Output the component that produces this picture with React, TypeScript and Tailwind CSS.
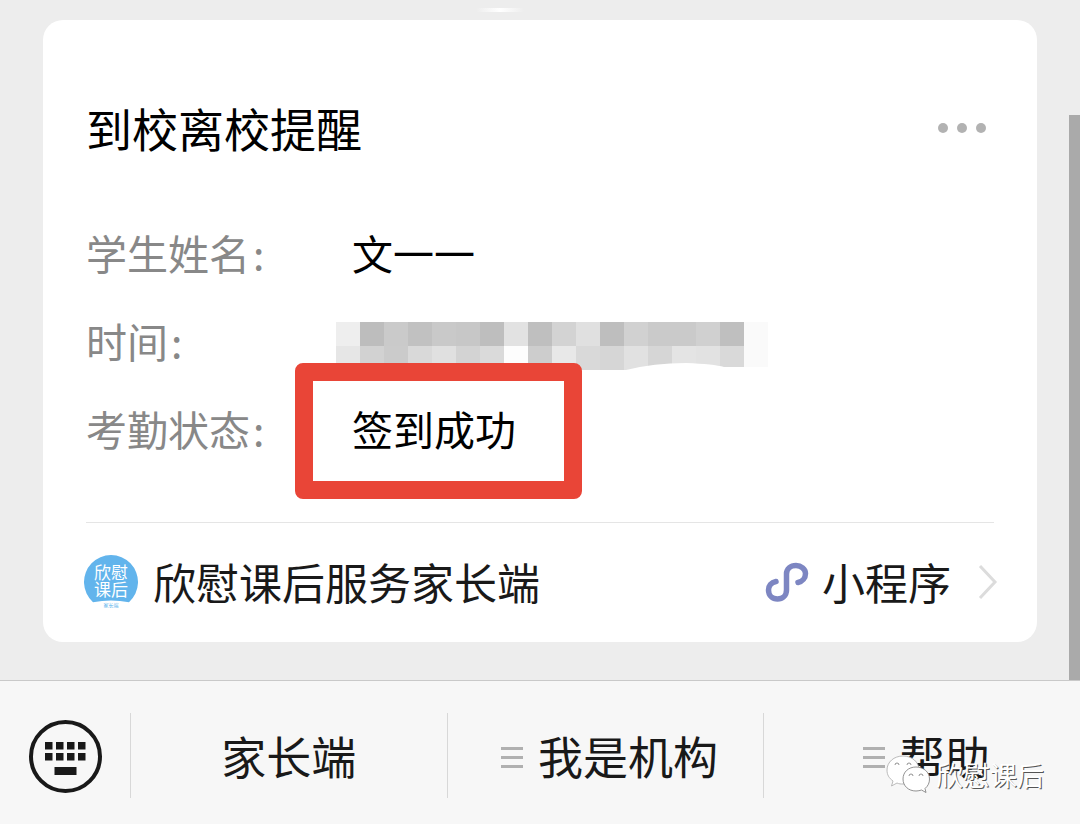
import type { ReactNode } from "react"

// block colours, one per 24px step
const MOSAIC_TOP = [
  "#eeeeee", "#bdbdbd", "#cacaca", "#c1c1c1", "#c9c9c9", "#c7c7c7", "#bebebe", "#e2e2e2", "#bfbfbf",
  "#d3d3d3", "#e0e0e0", "#bebebe", "#d1d1d1", "#cacaca", "#cacaca", "#d0d0d0", "#bfbfbf", "#fafafa",
]
const MOSAIC_BOTTOM = [
  "#e6e6e6", "#d2d2d2", "#cbcbcb", "#d9d9d9", "#e0e0e0", "#d3d3d3", "#dadada", "#fdfdfd", "#cdcdcd",
  "#e8e8e8", "#d9d9d9", "#d6d6d6", "#e1e1e1", "#d6d6d6", "#e4e4e4", "#e2e2e2", "#d9d9d9", "#fafafa",
]

export default function App() {
  return (
    <div className="relative flex min-h-screen flex-col bg-[#ededed] font-['Noto_Sans_CJK_SC',sans-serif] text-[#191919]">
      <main className="relative flex-1 px-[43px] pt-5 pb-[38px]">
        <div className="absolute top-2 left-[476px] h-1 w-12 rounded-full bg-linear-to-r from-[#ededed] via-white to-[#ededed]" />
        <NoticeCard />
        <div className="absolute right-0 bottom-0 top-[115px] w-[11px] bg-[#aaaaaa]" />
      </main>
      <MenuBar />
      <Watermark />
    </div>
  )
}

function NoticeCard() {
  return (
    <article className="rounded-[20px] bg-white px-[43px] pt-[59px]">
      <header className="flex items-center justify-between">
        <h1 className="text-[46px] leading-[96px] text-black">到校离校提醒</h1>
        <button type="button" aria-label="更多" className="mr-2 flex gap-[9px] pt-0.5">
          <span className="size-[10px] rounded-full bg-[#b2b2b2]" />
          <span className="size-[10px] rounded-full bg-[#b2b2b2]" />
          <span className="size-[10px] rounded-full bg-[#b2b2b2]" />
        </button>
      </header>

      <dl className="mt-[34px] text-[41px]">
        <Field label="学生姓名">文一一</Field>
        <Field label="时间">
          <Mosaic />
        </Field>
        <Field label="考勤状态">
          <span className="relative">
            签到成功
            <span className="absolute top-1/2 -left-[57px] mt-[3px] h-[136px] w-[287px] -translate-y-1/2 rounded-lg border-[18px] border-[#e94537]" />
          </span>
        </Field>
      </dl>

      <a href="#mini-program" className="mt-[49px] flex h-[120px] items-center border-t border-[#e5e5e5] pb-0.5 text-[43px]">
        <Avatar />
        <span className="ml-[15px] flex-1">欣慰课后服务家长端</span>
        <MiniProgramIcon />
        <span className="ml-3">小程序</span>
        <svg viewBox="0 0 20 36" className="ml-[27px] -mr-1 h-9 w-5" fill="none" stroke="#dcdcdc" strokeWidth="3">
          <path d="M2 2l15 16L2 34" />
        </svg>
      </a>
    </article>
  )
}

function Field({ label, children }: { label: string; children: ReactNode }) {
  return (
    <div className="flex h-[88px] items-center">
      <dt className="flex w-[266px] shrink-0 gap-[3px] text-[#888888]">
        <span>{label}</span>
        <span>:</span>
      </dt>
      <dd className="text-black">{children}</dd>
    </div>
  )
}

function Mosaic() {
  return (
    <svg viewBox="0 0 432 48" className="mt-[10px] -ml-4 h-12 w-[432px]" shapeRendering="crispEdges" role="img" aria-label="时间">
      {MOSAIC_TOP.map((c, i) => (
        <rect key={i} x={i * 24} y="0" width="24" height="24" fill={c} />
      ))}
      {MOSAIC_BOTTOM.map((c, i) => (
        <rect key={i} x={i * 24} y="24" width="24" height="24" fill={c} />
      ))}
      <path d="M290 48Q318 41 350 41Q378 42 388 45H432V48Z" fill="#fff" shapeRendering="auto" />
    </svg>
  )
}

function Avatar() {
  return (
    <svg viewBox="0 0 54 54" className="-ml-[2px] size-[54px] shrink-0" aria-hidden="true">
      <path d="M9 47.2A27 27 0 1 1 45 47.2Q27 44 9 47.2Z" fill="#62b4ec" />
      <g fill="#fff" textAnchor="middle" fontSize="17">
        <text x="27" y="24">欣慰</text>
        <text x="27" y="41">课后</text>
      </g>
      <text x="27" y="52" fontSize="5" fill="#62b4ec" textAnchor="middle">家长端</text>
    </svg>
  )
}

function MiniProgramIcon() {
  return (
    <svg viewBox="0 0 46 42" className="h-[42px] w-[46px]" fill="none" stroke="#7d86c2" strokeWidth="5.500" strokeLinecap="round">
      <path d="M12 20.5C7 21.5 4.500 25 4.500 29C4.500 34.500 8.500 38 13.500 38C18.500 38 22.500 34.500 22.500 29V13C22.500 8 26.500 4.500 32 4.500C37 4.500 41.500 8 41.500 12.500C41.500 17 38.500 20.500 34 21.500" />
    </svg>
  )
}

function MenuBar() {
  return (
    <nav className="flex h-[144px] border-t border-[#c9c9c9] bg-[#f7f7f7] pt-8 pb-[26px] text-[45px]">
      <button type="button" aria-label="键盘" className="flex w-[130px] items-center justify-center">
        <svg viewBox="0 0 74 74" className="size-[74px]" fill="#191919">
          <circle cx="37.500" cy="37.500" r="34.500" fill="none" stroke="#191919" strokeWidth="4" />
          {[17, 28, 39, 50].map((x) => (
            <g key={x}>
              <rect x={x} y="23" width="7.500" height="7.500" />
              <rect x={x} y="34" width="7.500" height="7.500" />
            </g>
          ))}
          <rect x="26.500" y="48" width="22" height="8" />
        </svg>
      </button>
      <MenuItem label="家长端" />
      <MenuItem label="我是机构" hasSubmenu />
      <MenuItem label="帮助" hasSubmenu />
    </nav>
  )
}

function MenuItem({ label, hasSubmenu }: { label: string; hasSubmenu?: boolean }) {
  return (
    <button type="button" className="flex flex-1 items-center justify-center border-l border-[#d8d8d8]">
      {hasSubmenu && (
        <span className="mt-1 mr-[15px] ml-2 flex flex-col gap-[6px]">
          <span className="h-[3px] w-[22px] bg-[#b0b0b0]" />
          <span className="h-[3px] w-[22px] bg-[#b0b0b0]" />
          <span className="h-[3px] w-[22px] bg-[#b0b0b0]" />
        </span>
      )}
      <span>{label}</span>
    </button>
  )
}

function Watermark() {
  return (
    <div className="pointer-events-none absolute right-9 bottom-7 flex items-center gap-[6px]">
      <svg viewBox="0 0 44 42" className="h-[42px] w-11" fill="#fff" stroke="#777" strokeWidth="0.800">
        <path d="M17 2C8 2 1 8 1 16C1 21 3 24 7 27L5.500 32L11 29C13 30 15 30 17 30C25 30 33 24 33 16C33 8 26 2 17 2Z" stroke="#aaa" />
        <path d="M30 13C22.500 13 17 18 17 25C17 32 22.500 37 30 37C32 37 34 36.500 35.500 36L40 38.500L39 34.500C42 32 43.500 29 43.500 25C43.500 18 37.500 13 30 13Z" />
        <path d="M9 11a2 2 0 0 1 4 0M21 11a2 2 0 0 1 4 0M23 22a2 2 0 0 1 4 0M33 22a2 2 0 0 1 4 0" fill="none" />
      </svg>
      <span className="text-[27px] leading-8 text-white [text-shadow:1px_1px_0_#555]">欣慰课后</span>
    </div>
  )
}
